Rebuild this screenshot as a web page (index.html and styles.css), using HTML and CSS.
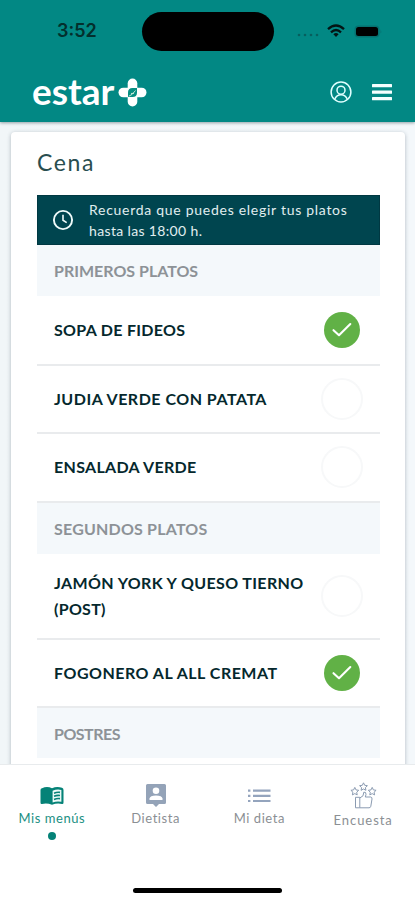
FILE: index.html
```html
<!DOCTYPE html>
<html lang="es">
<head>
<meta charset="utf-8">
<meta name="viewport" content="width=device-width, initial-scale=1">
<title>estar - Cena</title>
<link rel="stylesheet" href="styles.css">
</head>
<body>
<div class="app">
  <header class="header">
    <div class="status">
      <span class="time">3:52</span>
      <span class="island"></span>
      <span class="signals">
        <svg class="dots" width="22" height="4" viewBox="0 0 22 4"><g fill="#075f5e"><circle cx="2" cy="2" r="1.3"/><circle cx="8" cy="2" r="1.3"/><circle cx="14" cy="2" r="1.3"/><circle cx="20" cy="2" r="1.3"/></g></svg>
        <svg class="wifi" width="18" height="14" viewBox="0 0 18 14" fill="none" stroke="#041414" stroke-width="2.3"><path d="M1 5.1Q9-2.2 17 5.1"/><path d="M4 8.3Q9 3.8 14 8.3"/><path d="M6.4 10.2Q9 8 11.6 10.2L9 13Z" fill="#041414" stroke="none"/></svg>
        <svg class="battery" width="28" height="13" viewBox="0 0 28 13"><rect x=".5" y=".5" width="25" height="12" rx="4" fill="#067170"/><rect x="2" y="2" width="22" height="9" rx="2.5" fill="#000"/><path d="M26.5 4.5q1.5 2 0 4z" fill="#067170"/></svg>
      </span>
    </div>
    <div class="brandbar">
      <div class="brand"><span class="wordmark">estar</span>
        <svg width="29" height="29" viewBox="0 0 29 29"><g fill="#fff"><rect x="9.7" y=".5" width="9.6" height="28" rx="4.8"/><rect x=".5" y="9.7" width="28" height="9.6" rx="4.8"/></g><path d="M10 19V14.5Q10 10 14.5 10H19V14.5Q19 19 14.5 19Z" fill="#078e82"/><path d="M10.8 18.2Q14 17.5 17.5 12.5M13 15.5l3-.2" fill="none" stroke="#d6efdf" stroke-width=".9"/></svg>
      </div>
      <div class="actions">
        <svg width="22" height="22" viewBox="0 0 22 22" fill="none" stroke="#e0ffff" stroke-width="1.5"><circle cx="11" cy="11" r="9.9"/><circle cx="11" cy="9.2" r="4"/><path d="M4.8 18.1Q6.5 13.7 11 13.7T17.2 18.1"/></svg>
        <svg width="20" height="17" viewBox="0 0 20 17" fill="#f4ffff"><rect width="20" height="3.3" rx=".5"/><rect y="6.5" width="20" height="3.3" rx=".5"/><rect y="13" width="20" height="3.3" rx=".5"/></svg>
      </div>
    </div>
  </header>
  <main class="content">
    <section class="card">
      <h1 class="title">Cena</h1>
      <div class="notice">
        <svg width="22" height="22" viewBox="0 0 22 22" fill="none" stroke="#effbfa" stroke-width="1.9"><circle cx="11" cy="11" r="9.1"/><path d="M11 5.7V11.3L14.7 13.6" stroke-width="1.6"/></svg>
        <p><span class="n1">Recuerda que puedes elegir tus platos</span><br><span class="n2">hasta las 18:00 h.</span></p>
      </div>
      <h2 class="section"><span>PRIMEROS PLATOS</span></h2>
      <div class="row lead"><span class="dish">SOPA DE FIDEOS</span><span class="choice on"><svg width="20" height="16" viewBox="0 0 20 16"><path d="M1.5 8.2L7 13.2L18.3 2"/></svg></span></div>
      <div class="row"><span class="dish wide">JUDIA VERDE CON PATATA</span><span class="choice"></span></div>
      <div class="row"><span class="dish">ENSALADA VERDE</span><span class="choice"></span></div>
      <h2 class="section"><span class="s2">SEGUNDOS PLATOS</span></h2>
      <div class="row tall"><span class="dish"><span class="d4">JAMÓN YORK Y QUESO TIERNO</span><br><span>(POST)</span></span><span class="choice"></span></div>
      <div class="row"><span class="dish wide">FOGONERO AL ALL CREMAT</span><span class="choice on"><svg width="20" height="16" viewBox="0 0 20 16"><path d="M1.5 8.2L7 13.2L18.3 2"/></svg></span></div>
      <h2 class="section last"><span class="s3">POSTRES</span></h2>
    </section>
  </main>
  <nav class="nav">
    <div class="tabs">
      <a class="tab active">
        <span class="icon"><svg width="24" height="20" viewBox="0 0 24 20"><path d="M2 2.2Q7-.2 12 2.2Q17-.2 22 1.8Q23.5 2.4 23.5 4V16.5Q23.5 18.4 22 18Q17 16.8 12 18.8Q7 16.8 2 18Q.5 18.4.5 16.5V4Q.5 2.5 2 2.2Z" fill="#058277"/><path d="M12.6 4.8Q17 2.8 21.4 4V15.8Q16.5 14.8 12.6 16.6Z" fill="#eefaf8"/><path d="M14 7.2q3-1.3 6-.8M14 10.3q3-1.3 6-.8M14 13.4q3-1.3 6-.8" fill="none" stroke="#058277" stroke-width="1.6"/></svg></span>
        <span class="label">Mis menús</span><i class="dot"></i>
      </a>
      <a class="tab">
        <span class="icon"><svg width="20" height="23" viewBox="0 0 20 23"><path d="M1.5 0H18.5Q20 0 20 1.5V18.5Q20 20 18.5 20H13L10 23L7 20H1.5Q0 20 0 18.5V1.5Q0 0 1.5 0Z" fill="#94a3b8"/><circle cx="10" cy="6.7" r="3.3" fill="#fff"/><path d="M3.5 16V14.5Q4 11.5 10 11.5T16.5 14.5V16Z" fill="#fff"/></svg></span>
        <span class="label">Dietista</span>
      </a>
      <a class="tab">
        <span class="icon"><svg width="23" height="14" viewBox="0 0 23 14" fill="#94a4bd"><path d="M0 .5h2.4v2.2H0zM5 .5h17.5v2.2H5zM0 5.7h2.4v2.2H0zM5 5.7h17.5v2.2H5zM0 10.9h2.4v2.2H0zM5 10.9h17.5v2.2H5z"/></svg></span>
        <span class="label">Mi dieta</span>
      </a>
      <a class="tab survey">
        <span class="icon"><svg width="27" height="27" viewBox="0 0 27 27" fill="none" stroke="#8b9bb1" stroke-width="1"><path id="star" d="M13.5.8l1.2 2.5 2.7.4-2 1.9.5 2.7-2.4-1.3-2.4 1.3.5-2.7-2-1.9 2.7-.4z"/><use href="#star" x="-8.7" y="4.6"/><use href="#star" x="8.7" y="4.6"/><path d="M5.5 15.3H9.8V25.8H5.5ZM9.8 16L13 13.8L13.8 10.2Q16.2 9.6 16 12.5L15.3 15H20.8Q22.2 15.3 22 17L20.8 24.3Q20.5 25.8 19 25.8H9.8"/></svg></span>
        <span class="label">Encuesta</span>
      </a>
    </div>
    <div class="home"></div>
  </nav>
</div>
</body>
</html>
```
FILE: styles.css
```css
* { box-sizing: border-box; }
body { margin: 0; font-family: Lato, "Liberation Sans", sans-serif; color: #05282d; background: #f4f8fa; }
.app { height: 900px; width: 415px; display: flex; flex-direction: column; overflow: hidden; }
.header { height: 122px; flex: none; background: #028884; box-shadow: 0 1px 3px rgba(0, 30, 40, .4); z-index: 1; }
.status { height: 62px; display: grid; grid-template-columns: 142px 132px 1fr; align-items: center; }
.time { padding-left: 57px; font: 600 18px/20px Inter, sans-serif; color: #032f2d; }
.island { height: 39px; border-radius: 20px; background: #000; }
.signals { display: flex; align-items: center; padding-left: 23px; }
.dots { margin-top: 8px; }
.wifi { margin-left: 8px; }
.battery { margin-left: 9px; }
.brandbar { height: 60px; display: flex; justify-content: space-between; padding: 0 23px 0 32px; }
.brand { display: flex; height: 60px; align-items: center; }
.brand svg { margin-left: 3px; }
.wordmark { width: 83px; font-size: 37px; line-height: 40px; font-weight: 700; color: #fff; margin-top: -3px; }
.actions { display: flex; align-items: center; gap: 20px; }
.content { flex: 1; min-height: 0; overflow: hidden; padding: 10px 10px 0 11px; background: linear-gradient(90deg, #f1f6f8, #f4f8fb); }
.card { height: 760px; background: #fff; border-radius: 4px; padding: 0 25px 0 26px; box-shadow: 0 1px 4px rgba(20, 40, 60, .3); }
.title { margin: 0; height: 63px; padding-top: 14px; font-size: 23px; line-height: 32px; font-weight: 400; letter-spacing: 1.6px; color: #294e50; }
.notice { height: 50px; display: flex; align-items: center; gap: 15px; padding-left: 14px; background: #00454f; border: 1px solid #003842; color: #e0eef0; }
.notice p { margin: 0; font-size: 14px; line-height: 21px; white-space: nowrap; }
.n1 { letter-spacing: .72px; }
.n2 { letter-spacing: .35px; }
.section { margin: 0; height: 51px; padding-left: 17px; display: flex; align-items: center; background: #f4f8fb; font-size: 16px; font-weight: 700; color: #8d9297; }
.section.last { height: 50px; }
.s2 { letter-spacing: .2px; }
.s3 { letter-spacing: -.5px; }
.row { height: 68.5px; display: flex; align-items: center; justify-content: space-between; padding: 0 17px; border-bottom: 2px solid #e9ebed; }
.row.lead { height: 69.5px; }
.row.tall { height: 86px; }
.dish { font-size: 16px; line-height: 26px; font-weight: 700; letter-spacing: .3px; white-space: nowrap; }
.dish.wide { letter-spacing: .5px; }
.d4 { letter-spacing: .37px; }
.choice { width: 42px; height: 42px; flex: none; border: 2px solid #f7f8f9; border-radius: 50%; display: flex; align-items: center; justify-content: center; }
.choice.on { width: 36px; height: 36px; margin-right: 3px; background: #61b146; border: 0; }
.choice svg { fill: none; stroke: #fff; stroke-width: 2.1; stroke-linecap: round; stroke-linejoin: round; }
.nav { height: 136px; flex: none; background: #fff; border-top: 1px solid #e8ebed; z-index: 1; display: flex; flex-direction: column; justify-content: space-between; align-items: center; padding-bottom: 7px; }
.tabs { width: 415px; display: grid; grid-template-columns: repeat(4, 1fr); padding-top: 16px; }
.tab { display: flex; flex-direction: column; align-items: center; }
.icon { height: 29px; display: flex; align-items: center; }
.label { font-size: 13px; line-height: 16px; letter-spacing: .55px; color: #8b8f94; white-space: nowrap; }
.survey .label { margin-top: 2px; letter-spacing: .95px; }
.active .label { color: #218f83; }
.dot { width: 8px; height: 8px; margin-top: 6px; border-radius: 50%; background: #058277; }
.home { width: 149px; height: 5px; border-radius: 3px; background: #000; }
```
